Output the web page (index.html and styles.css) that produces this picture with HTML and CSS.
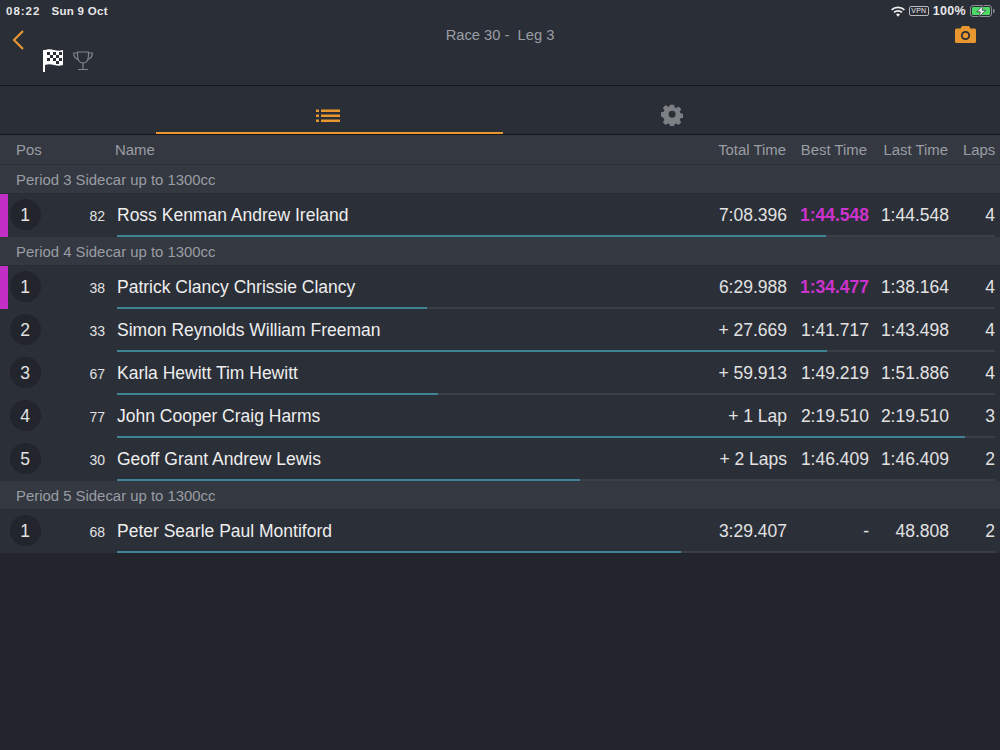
FILE: index.html
```html
<!DOCTYPE html>
<html lang="en">
<head>
<meta charset="utf-8">
<title>Race 30 - Leg 3</title>
<link rel="stylesheet" href="styles.css">
</head>
<body>
<div class="app">
  <header class="top">
    <div class="status">
      <div class="status-left"><span class="clock">08:22</span><span>Sun 9 Oct</span></div>
      <div class="status-right">
        <svg class="wifi" width="14" height="11" viewBox="0 0 15 11"><path d="M7.5 11 5.4 8.7a3 3 0 0 1 4.2 0zM3.9 7.2 2.6 5.8a7 7 0 0 1 9.8 0l-1.3 1.4a5.1 5.1 0 0 0-7.2 0zM1.3 4.5 0 3.1a10.7 10.7 0 0 1 15 0l-1.3 1.4a8.8 8.8 0 0 0-12.4 0z" fill="#f2f2f2"/></svg>
        <span class="vpn">VPN</span>
        <span class="pct">100%</span>
        <svg class="batt" width="25" height="12" viewBox="0 0 25 12"><rect x=".5" y=".5" width="21" height="11" rx="2.5" fill="none" stroke="#8b8f93"/><rect x="2" y="2" width="18" height="8" rx="1.2" fill="#4cd964"/><rect x="23" y="4" width="1.5" height="4" rx=".7" fill="#8b8f93"/><path d="M13.400 0 6.800 6.800h3.600L9 12l6.600-6.800h-3.600z" fill="#f4f4f4" stroke="#2a2e37" stroke-width=".7"/></svg>
      </div>
    </div>
    <div class="nav">
      <div class="nav-left">
        <svg class="back" width="14" height="22" viewBox="0 0 14 22"><path d="M12 2 3 11l9 9" fill="none" stroke="#e8962f" stroke-width="2.2"/></svg>
        <div class="nav-icons">
          <svg width="22" height="24" viewBox="0 0 22 24">
            <path d="M1 2h2v22H1z" fill="#fff"/>
            <path d="M3 2q4-1.500 9 0t9 0v15q-4 1.500-9 0t-9 0z" fill="#fff"/>
            <path d="M5 4h3v3H5zM11 4h3v3h-3zM17 4h3v3h-3zM8 7h3v3H8zM14 7h3v3h-3zM5 10h3v3H5zM11 10h3v3h-3zM17 10h3v3h-3zM14 13h3v3h-3z" fill="#2a2e37"/>
          </svg>
          <svg class="trophy" width="20" height="20" viewBox="0 0 20 20" fill="none" stroke="#81848a" stroke-width="1.2">
            <path d="M4.500 1h11v3c0 5-2 8-5.500 8S4.500 9 4.500 4z"/>
            <path d="M4.500 2H.7c0 4 1.500 6 5 6.500M15.500 2h3.800c0 4-1.500 6-5 6.500M10 12v6M5 18.500h10"/>
          </svg>
        </div>
      </div>
      <div class="title">Race 30 -&nbsp; Leg 3</div>
      <svg class="camera" width="21" height="17" viewBox="0 0 21 17"><path d="M1.500 2.500h4L7 0h7l1.500 2.500h4q1.500 0 1.500 1.500v11.500q0 1.500-1.500 1.500h-18Q0 17 0 15.500V4q0-1.500 1.500-1.500z" fill="#e8962f"/><circle cx="10.500" cy="9.500" r="3.700" fill="none" stroke="#2a2e37" stroke-width="1.800"/></svg>
    </div>
  </header>

  <nav class="tabs">
    <div class="tab tab-active">
      <svg width="24" height="14" viewBox="0 0 24 14" fill="#e8962f"><path d="M0 .5h3v2.500H0zM0 5.500h3V8H0zM0 10.500h3V13H0zM5 .5h19v2.500H5zM5 5.500h19V8H5zM5 10.500h19V13H5z"/></svg>
    </div>
    <div class="tab tab-off">
      <svg width="22" height="22" viewBox="0 0 24 24"><path fill="#7c7f84" fill-rule="evenodd" d="M9.700 1h4.600l.6 3.100 1.900.8 2.600-1.800 3.200 3.200-1.800 2.600.8 1.900 3.100.6v4.600l-3.100.6-.8 1.900 1.800 2.600-3.200 3.200-2.600-1.800-1.900.8-.6 3.100H9.700l-.6-3.100-1.900-.8-2.600 1.800-3.200-3.200 1.800-2.600-.8-1.900L-.7 14.400V9.800l3.100-.6.8-1.900-1.800-2.600 3.200-3.200 2.600 1.800 1.900-.8zM12 8a4 4 0 1 0 0 8 4 4 0 0 0 0-8z" transform="translate(.7 -.2) scale(.95)"/></svg>
    </div>
  </nav>

  <div class="cols">
    <span class="c-pos">Pos</span>
    <span class="c-name">Name</span>
    <span class="c-total">Total Time</span>
    <span class="c-best">Best Time</span>
    <span class="c-last">Last Time</span>
    <span class="c-laps">Laps</span>
  </div>

  <div class="group">Period 3 Sidecar up to 1300cc</div>
  <div class="row">
    <div class="stripe stripe-on"></div>
    <div class="row-body">
      <div class="row-main">
        <span class="pos">1</span><span class="num">82</span><span class="name">Ross Kenman Andrew Ireland</span>
        <span class="t-total">7:08.396</span><span class="t-best fast">1:44.548</span><span class="t-last">1:44.548</span><span class="t-laps">4</span>
      </div>
      <div class="track"><div class="fill" style="width:80.8%"></div></div>
    </div>
  </div>

  <div class="group">Period 4 Sidecar up to 1300cc</div>
  <div class="row">
    <div class="stripe stripe-on"></div>
    <div class="row-body">
      <div class="row-main">
        <span class="pos">1</span><span class="num">38</span><span class="name">Patrick Clancy Chrissie Clancy</span>
        <span class="t-total">6:29.988</span><span class="t-best fast">1:34.477</span><span class="t-last">1:38.164</span><span class="t-laps">4</span>
      </div>
      <div class="track"><div class="fill" style="width:35.3%"></div></div>
    </div>
  </div>
  <div class="row">
    <div class="stripe"></div>
    <div class="row-body">
      <div class="row-main">
        <span class="pos">2</span><span class="num">33</span><span class="name">Simon Reynolds William Freeman</span>
        <span class="t-total">+ 27.669</span><span class="t-best">1:41.717</span><span class="t-last">1:43.498</span><span class="t-laps">4</span>
      </div>
      <div class="track"><div class="fill" style="width:80.9%"></div></div>
    </div>
  </div>
  <div class="row">
    <div class="stripe"></div>
    <div class="row-body">
      <div class="row-main">
        <span class="pos">3</span><span class="num">67</span><span class="name">Karla Hewitt Tim Hewitt</span>
        <span class="t-total">+ 59.913</span><span class="t-best">1:49.219</span><span class="t-last">1:51.886</span><span class="t-laps">4</span>
      </div>
      <div class="track"><div class="fill" style="width:36.6%"></div></div>
    </div>
  </div>
  <div class="row">
    <div class="stripe"></div>
    <div class="row-body">
      <div class="row-main">
        <span class="pos">4</span><span class="num">77</span><span class="name">John Cooper Craig Harms</span>
        <span class="t-total">+ 1 Lap</span><span class="t-best">2:19.510</span><span class="t-last">2:19.510</span><span class="t-laps">3</span>
      </div>
      <div class="track"><div class="fill" style="width:96.6%"></div></div>
    </div>
  </div>
  <div class="row">
    <div class="stripe"></div>
    <div class="row-body">
      <div class="row-main">
        <span class="pos">5</span><span class="num">30</span><span class="name">Geoff Grant Andrew Lewis</span>
        <span class="t-total">+ 2 Laps</span><span class="t-best">1:46.409</span><span class="t-last">1:46.409</span><span class="t-laps">2</span>
      </div>
      <div class="track"><div class="fill" style="width:52.7%"></div></div>
    </div>
  </div>

  <div class="group">Period 5 Sidecar up to 1300cc</div>
  <div class="row">
    <div class="stripe"></div>
    <div class="row-body">
      <div class="row-main">
        <span class="pos">1</span><span class="num">68</span><span class="name">Peter Searle Paul Montiford</span>
        <span class="t-total">3:29.407</span><span class="t-best">-</span><span class="t-last">48.808</span><span class="t-laps">2</span>
      </div>
      <div class="track"><div class="fill" style="width:64.2%"></div></div>
    </div>
  </div>
</div>
</body>
</html>
```
FILE: styles.css
```css
* { box-sizing: border-box; }
html, body { margin: 0; padding: 0; height: 100%; }
body {
  background: #22252c;
  font-family: "Liberation Sans", Arial, sans-serif;
  color: #e8e8e8;
  overflow: hidden;
}
.app { width: 1000px; height: 750px; }

.top { height: 86px; background: #2a2e37; border-bottom: 1px solid #15171b; }
.status {
  height: 20px;
  padding: 2px 5px 0 6px;
  display: flex;
  justify-content: space-between;
  align-items: center;
  font-size: 11.5px;
  font-weight: bold;
  color: #e6e6e8;
}
.status-left { display: flex; gap: 11px; letter-spacing: .3px; }
.clock { letter-spacing: 1px; }
.status-right { display: flex; align-items: center; gap: 4px; }
.vpn {
  font-size: 7px;
  font-weight: normal;
  line-height: 8px;
  padding: 0 1.5px;
  border: 1px solid #b9babc;
  border-radius: 2px;
  letter-spacing: .2px;
}
.pct { font-size: 12.5px; letter-spacing: .3px; }

.nav { position: relative; display: flex; justify-content: space-between; height: 65px; padding: 9px 24px 0 11px; }
.nav-left { display: flex; }
.nav-icons { display: flex; align-items: flex-start; gap: 9px; margin-top: 19px; margin-left: 17px; }
.trophy { margin-top: 3px; }
.title { position: absolute; left: 0; right: 0; top: 7px; text-align: center; font-size: 14.7px; color: #9b9ea4; }
.camera { margin-top: -3px; }

.tabs { display: flex; height: 49px; padding-left: 156px; padding-right: 150px; background: #2a2e37; border-bottom: 1px solid #15171b; }
.tab { display: flex; justify-content: center; align-items: center; height: 48px; }
.tab-active { flex: none; width: 347px; border-bottom: 2px solid #e8962f; padding-top: 13px; padding-right: 4px; }
.tab-off { flex: 1; padding-top: 10px; padding-right: 9px; }

.cols {
  height: 30px;
  padding-top: 1px;
  display: flex;
  align-items: center;
  background: #343841;
  border-bottom: 1px solid #2a2d34;
  font-size: 14.9px;
  color: #9a9da3;
}
.c-pos { width: 115px; padding-left: 16px; }
.c-name { flex: 1; }
.c-total { width: 72px; text-align: right; margin-right: 14px; }
.c-best { width: 67px; text-align: right; margin-right: 16px; }
.c-last { width: 65px; text-align: right; margin-right: 15px; }
.c-laps { width: 32px; text-align: right; margin-right: 5px; }

.group {
  height: 29px;
  display: flex;
  align-items: center;
  padding: 2px 0 0 16px;
  background: #343841;
  border-bottom: 1px solid #2a2d34;
  font-size: 14.9px;
  color: #9a9da3;
}

.row { display: flex; height: 43px; background: #2b2f38; }
.stripe { width: 8px; flex: none; }
.stripe-on { background: #c22fc6; }
.row-body { flex: 1; display: flex; flex-direction: column; min-width: 0; }
.row-main { flex: 1; display: flex; align-items: center; padding-top: 2px; font-size: 17.5px; color: #e2e2e2; }
.pos {
  flex: none;
  width: 31px;
  height: 31px;
  margin: -2px 0 0 2px;
  padding: 2px 1px 0 0;
  border-radius: 50%;
  background: #22252b;
  display: flex;
  align-items: center;
  justify-content: center;
  font-size: 17.5px;
}
.num { flex: none; width: 64px; text-align: right; font-size: 14px; }
.name { flex: 1; margin-left: 12px; color: #eeeeee; }
.t-total { width: 90px; text-align: right; }
.t-best { width: 82px; text-align: right; }
.fast { color: #cc33cc; font-weight: bold; }
.t-last { width: 80px; text-align: right; }
.t-laps { width: 46px; text-align: right; margin-right: 5px; }
.track { flex: none; height: 2px; margin-left: 109px; margin-right: 5px; background: #3a3e46; }
.fill { height: 2px; background: #3f8493; }
```
